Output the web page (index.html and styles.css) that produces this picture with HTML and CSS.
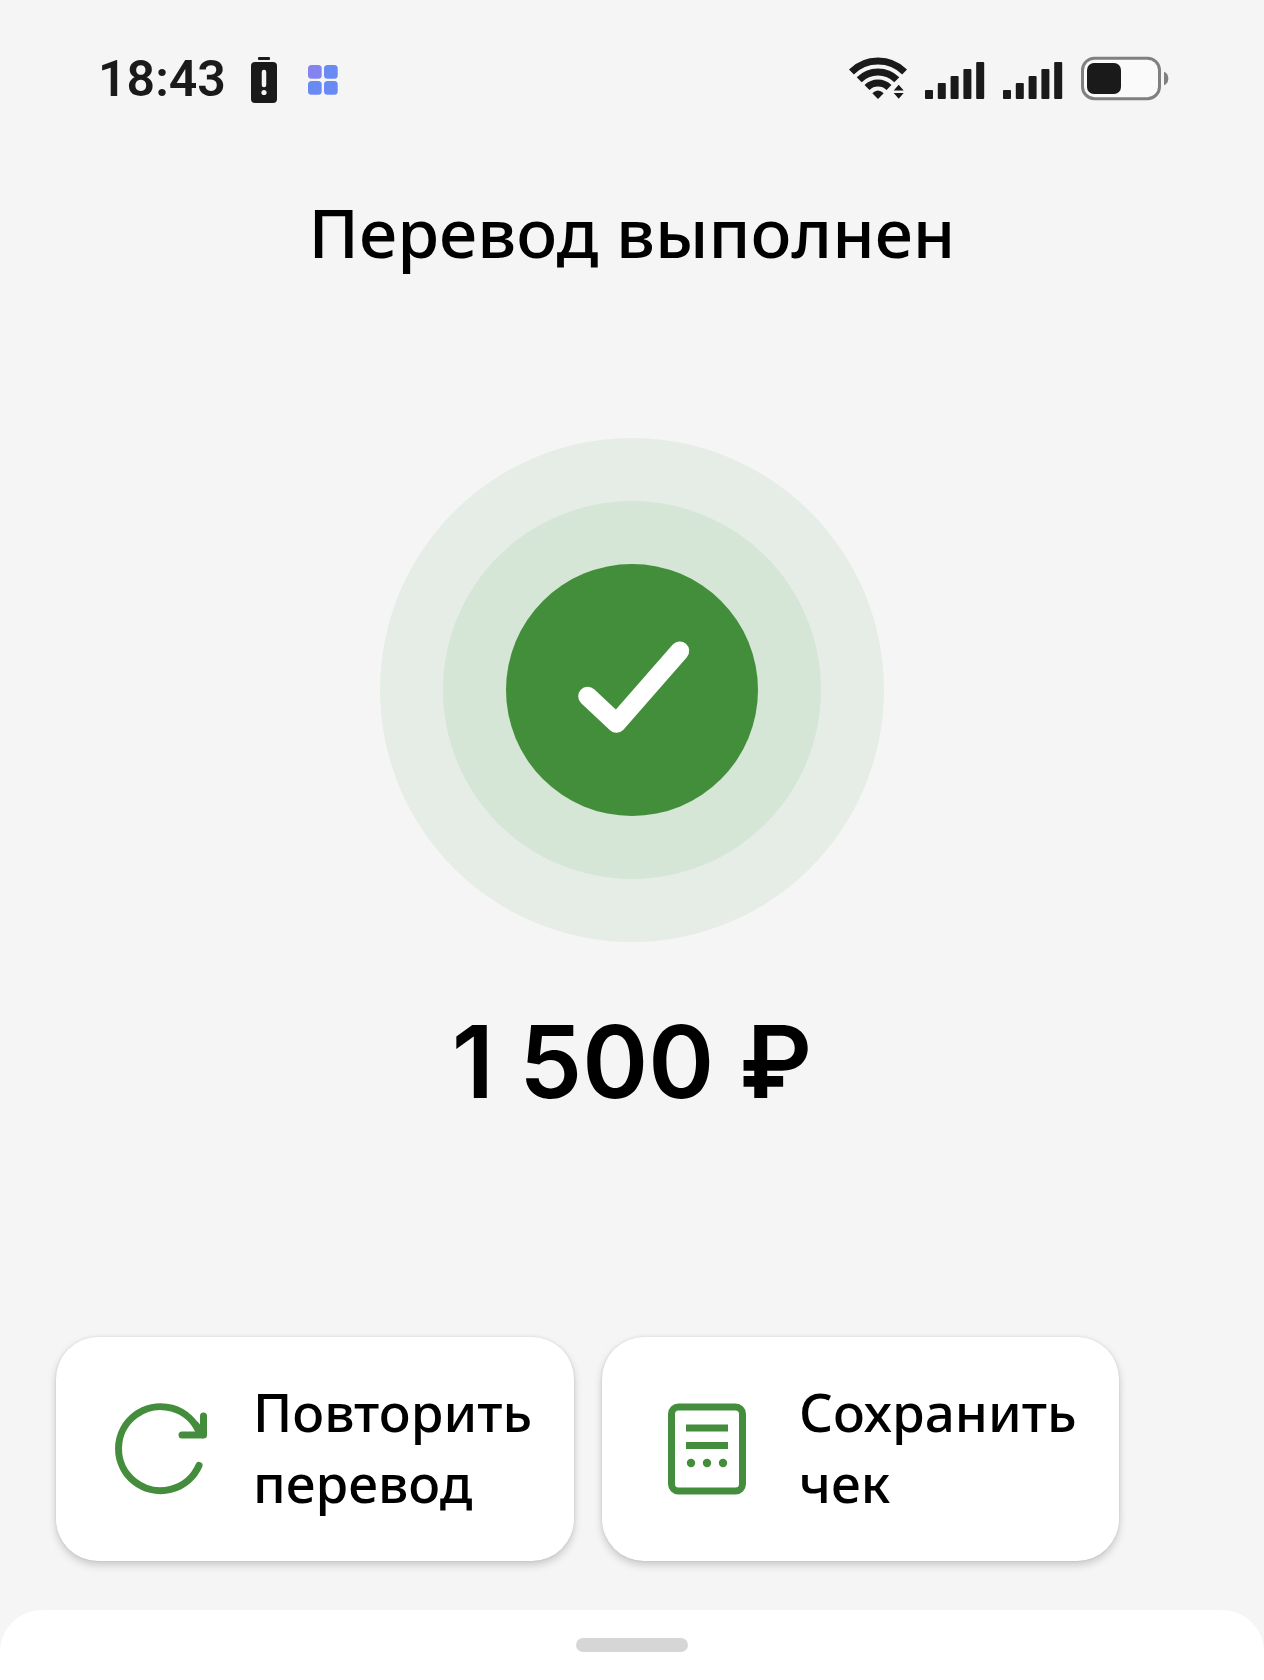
FILE: index.html
```html
<!DOCTYPE html>
<html lang="ru">
<head>
  <meta charset="UTF-8">
  <meta name="viewport" content="width=device-width, initial-scale=1">
  <title>Перевод выполнен</title>
  <link rel="stylesheet" href="styles.css">
</head>
<body>

  <div class="status-bar">
    <div class="status-left">
      <span class="time">18:43</span>
      <svg width="28" height="48" viewBox="0 0 28 48">
        <rect x="8" y="2" width="12" height="3" rx="1" fill="#1a1a1a"/>
        <rect x="1" y="7" width="26" height="41" rx="4" fill="#1a1a1a"/>
        <path d="M14 17V30" stroke="#f5f5f5" stroke-width="4.5" stroke-linecap="round"/>
        <circle cx="14" cy="37.5" r="2.6" fill="#f5f5f5"/>
      </svg>
      <svg class="apps" width="30" height="48" viewBox="0 0 30 48">
        <rect x="0" y="10" width="13.7" height="13.7" rx="3.5" fill="#8484ee"/>
        <rect x="16" y="10" width="13.7" height="13.7" rx="3.5" fill="#6a8af3"/>
        <rect x="0" y="26" width="13.7" height="13.7" rx="3.5" fill="#6a8af3"/>
        <rect x="16" y="26" width="13.7" height="13.7" rx="3.5" fill="#6a8af3"/>
      </svg>
    </div>
    <div class="status-right">
      <svg width="58" height="48" viewBox="0 0 58 48">
        <g fill="none" stroke="#1a1a1a" stroke-width="7">
          <path d="M2.4 17A37.8 37.8 0 0 1 55.6 17"/>
          <path d="M10.2 24.8A26.5 26.5 0 0 1 47.8 24.8"/>
          <path d="M18 32.6A15.7 15.7 0 0 1 40 32.6"/>
        </g>
        <path d="M29 44L23.3 38.3Q29 32.6 34.7 38.3Z" fill="#1a1a1a"/>
        <path d="M44.7 35.5L49.7 29.8L54.7 35.5Z M44.7 38L54.7 38L49.7 43.7Z" fill="#1a1a1a"/>
      </svg>
      <svg width="60" height="48" viewBox="0 0 60 48" fill="#1a1a1a">
        <rect x="0" y="35" width="8" height="9" rx="1"/>
        <rect x="12.8" y="28" width="8" height="16" rx="1"/>
        <rect x="25.6" y="21" width="8" height="23" rx="1"/>
        <rect x="38.4" y="14" width="8" height="30" rx="1"/>
        <rect x="51.2" y="7" width="8" height="37" rx="1"/>
      </svg>
      <svg width="60" height="48" viewBox="0 0 60 48" fill="#1a1a1a">
        <rect x="0" y="35" width="8" height="9" rx="1"/>
        <rect x="12.8" y="28" width="8" height="16" rx="1"/>
        <rect x="25.6" y="21" width="8" height="23" rx="1"/>
        <rect x="38.4" y="14" width="8" height="30" rx="1"/>
        <rect x="51.2" y="7" width="8" height="37" rx="1"/>
      </svg>
      <svg width="88" height="48" viewBox="0 0 88 48">
        <rect x="1.5" y="3.2" width="77" height="40.5" rx="12" fill="#fafafa" stroke="#808080" stroke-width="3"/>
        <rect x="6" y="8" width="34" height="31" rx="7" fill="#1a1a1a"/>
        <path d="M83 16.7Q87.3 18.5 87.3 23.5T83 30.3Z" fill="#808080"/>
      </svg>
    </div>
  </div>

  <main class="content">
    <h1 class="title">Перевод выполнен</h1>

    <div class="rings">
      <div class="ring">
        <div class="check">
          <svg width="252" height="252" viewBox="0 0 252 252">
            <path d="M81.7 132.3L110.5 159.3L173.7 87" fill="none" stroke="#fff" stroke-width="19" stroke-linecap="round" stroke-linejoin="round"/>
          </svg>
        </div>
      </div>
    </div>

    <div class="amount">1 500 ₽</div>

    <div class="actions">
      <button class="action" type="button">
        <svg class="action-icon" width="112" height="112" viewBox="0 0 112 112" fill="none" stroke="#448d3c" stroke-width="7" stroke-linecap="round" stroke-linejoin="round">
          <path d="M94 72.5A42 42 0 1 1 94.5 40"/>
          <path d="M98.5 23V42H77M91 32L98 42"/>
        </svg>
        <span>Повторить<br>перевод</span>
      </button>
      <button class="action" type="button">
        <svg class="action-icon" width="112" height="112" viewBox="0 0 112 112" fill="none" stroke="#448d3c" stroke-width="7">
          <rect x="20.5" y="14" width="71" height="84" rx="7"/>
          <path d="M35 35H77M35 52.5H77"/>
          <g fill="#448d3c" stroke="none">
            <circle cx="40" cy="70" r="4.2"/>
            <circle cx="56" cy="70" r="4.2"/>
            <circle cx="72" cy="70" r="4.2"/>
          </g>
        </svg>
        <span>Сохранить<br>чек</span>
      </button>
    </div>
  </main>

  <div class="sheet">
    <div class="handle"></div>
  </div>

</body>
</html>
```
FILE: styles.css
```css
* {
  box-sizing: border-box;
}

body {
  margin: 0;
  min-height: 100vh;
  display: flex;
  flex-direction: column;
  background: #f5f5f5;
  color: #000;
  font-family: 'Noto Sans', 'Open Sans', sans-serif;
}

svg {
  display: block;
  flex-shrink: 0;
}

.status-bar {
  display: flex;
  justify-content: space-between;
  padding: 54px 95px 0 98px;
}

.status-left,
.status-right {
  display: flex;
  align-items: center;
}

.status-left {
  gap: 24px;
}

.status-right {
  gap: 18px;
}

.time {
  font-family: Roboto, sans-serif;
  font-size: 50px;
  font-weight: 600;
  line-height: 50px;
  color: #1a1a1a;
}

.apps {
  margin-left: 6px;
}

.content {
  display: flex;
  flex-direction: column;
  align-items: center;
}

.title {
  margin: 80px 0 0;
  font-size: 68px;
  font-weight: 500;
  line-height: 96px;
}

.rings {
  margin-top: 158px;
  padding: 63px;
  border-radius: 50%;
  background: #e6ede6;
}

.ring {
  padding: 63px;
  border-radius: 50%;
  background: #d5e5d6;
}

.check {
  border-radius: 50%;
  background: #428e3a;
}

.amount {
  margin-top: 48px;
  font-family: Inter, 'Noto Sans', sans-serif;
  font-size: 100px;
  font-weight: 600;
  line-height: 144px;
}

.actions {
  align-self: stretch;
  display: flex;
  gap: 28px;
  margin-top: 203px;
  padding: 0 56px;
}

.action {
  display: flex;
  align-items: center;
  gap: 36px;
  padding: 39px 42px 43px 49px;
  border: none;
  border-radius: 42px;
  background: #fff;
  box-shadow: 0 4px 8px rgba(0, 0, 0, 0.18), 0 0 3px rgba(0, 0, 0, 0.1);
  color: #000;
  font-family: inherit;
  font-size: 53px;
  font-weight: 500;
  line-height: 71px;
  text-align: left;
  cursor: pointer;
}

.action-icon {
  margin-top: 4px;
}

.sheet {
  flex: 1;
  display: flex;
  justify-content: center;
  align-items: flex-start;
  min-height: 70px;
  margin-top: 49px;
  padding-top: 28px;
  border-radius: 42px 42px 0 0;
  background: #fff;
}

.handle {
  width: 112px;
  height: 14px;
  border-radius: 7px;
  background: #d6d6d6;
}
```
